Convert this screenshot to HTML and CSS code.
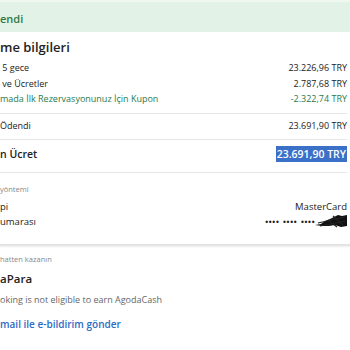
FILE: index.html
```html
<!DOCTYPE html>
<html lang="tr">
<head>
    <meta charset="UTF-8">
    <meta name="viewport" content="width=device-width, initial-scale=1.0">
    <title>Ödeme bilgileri</title>
    <link rel="stylesheet" href="styles.css">
</head>
<body>
    <div class="status-bar">endi</div>

    <div class="panel">
        <h2 class="title">me bilgileri</h2>

        <div class="breakdown">
            <div class="row"><span>&nbsp;5 gece</span><span>23.226,96 TRY</span></div>
            <div class="row"><span>&nbsp;ve Ücretler</span><span>2.787,68 TRY</span></div>
            <div class="row discount"><span>mada İlk Rezervasyonunuz İçin Kupon</span><span>-2.322,74 TRY</span></div>
        </div>

        <div class="row paid"><span>Ödendi</span><span>23.691,90 TRY</span></div>

        <div class="row grand"><span>n Ücret</span><span class="selected">23.691,90 TRY</span></div>

        <div class="payment">
            <div class="label">yöntemi</div>
            <div class="row"><span>pi</span><span>MasterCard</span></div>
            <div class="row">
                <span>umarası</span>
                <span class="card-no">
                    <span class="dots">•••• •••• ••••</span>
                    <svg class="scribble" width="32" height="14" viewBox="0 0 32 14">
                        <path d="M0 11 L6 10 L10 7 L15 5 L19 3 L23 1 L27 2 L32 1 L32 12 L26 13 L20 11 L14 12 L7 12 Z" fill="#111"/>
                        <path d="M3 9 L30 3 M5 12 L31 7 M13 6 L22 13 M18 2 L28 11" stroke="#222" stroke-width="1.2"/>
                    </svg>
                </span>
            </div>
        </div>
    </div>

    <div class="divider"></div>

    <div class="panel cash">
        <div class="label">hatten kazanın</div>
        <div class="cash-title">aPara</div>
        <div class="cash-note">oking is not eligible to earn AgodaCash</div>
        <div class="mail-link">mail ile e-bildirim gönder</div>
    </div>
</body>
</html>
```

FILE: styles.css
```css
body {
    font-family: "Open Sans", "Noto Sans", sans-serif;
    background-color: #fff;
    color: #222;
    margin: 0;
    padding: 0;
    width: 350px;
    overflow: hidden;
}

.status-bar {
    height: 32px;
    line-height: 34px;
    background-color: #e3f2e7;
    border-top: 2px solid #eef7f0;
    box-sizing: border-box;
    color: #2f7a46;
    font-weight: 600;
    font-size: 11px;
}

.panel {
    padding-right: 3px;
}

.title {
    margin: 6px 0 0;
    font-size: 13px;
    line-height: 18px;
    font-weight: 600;
    color: #222;
}

.row {
    display: flex;
    justify-content: space-between;
    align-items: center;
    font-size: 9px;
    line-height: 15.5px;
    color: #222;
}

.breakdown {
    padding: 4px 0 6px;
}

.discount {
    color: #2b7a4b;
}

.paid {
    border-top: 1px solid #e6e6e6;
    padding: 4px 0 5px;
    line-height: 16px;
}

.grand {
    border-top: 1px solid #e6e6e6;
    border-bottom: 1px solid #e6e6e6;
    padding: 5px 0 9px;
    font-size: 10.5px;
    font-weight: 600;
    line-height: 18px;
}

.selected {
    background-color: #3a70c8;
    color: #fff;
    padding: 0 1px;
    line-height: 16px;
}

.payment {
    padding: 10px 0 15px;
}

.label {
    font-size: 7.5px;
    line-height: 12px;
    color: #888;
    margin-bottom: 4px;
}

.payment .row {
    font-size: 9.5px;
    line-height: 15px;
}

.card-no {
    display: flex;
    align-items: center;
}

.dots {
    font-size: 9px;
    letter-spacing: 0.2px;
    word-spacing: 1px;
    font-weight: 600;
}

.divider {
    height: 2px;
    background-color: #e4e4e4;
    box-shadow: 0 1px 2px rgba(0, 0, 0, 0.08);
}

.cash {
    padding-top: 7px;
}

.cash .label {
    margin-bottom: 5px;
}

.cash-title {
    font-size: 11.5px;
    font-weight: 600;
    line-height: 18px;
}

.cash-note {
    margin-top: 5px;
    font-size: 9px;
    line-height: 14px;
    color: #666;
}

.mail-link {
    margin-top: 9px;
    font-size: 10px;
    line-height: 16px;
    font-weight: 600;
    color: #2c6bc4;
}
```
